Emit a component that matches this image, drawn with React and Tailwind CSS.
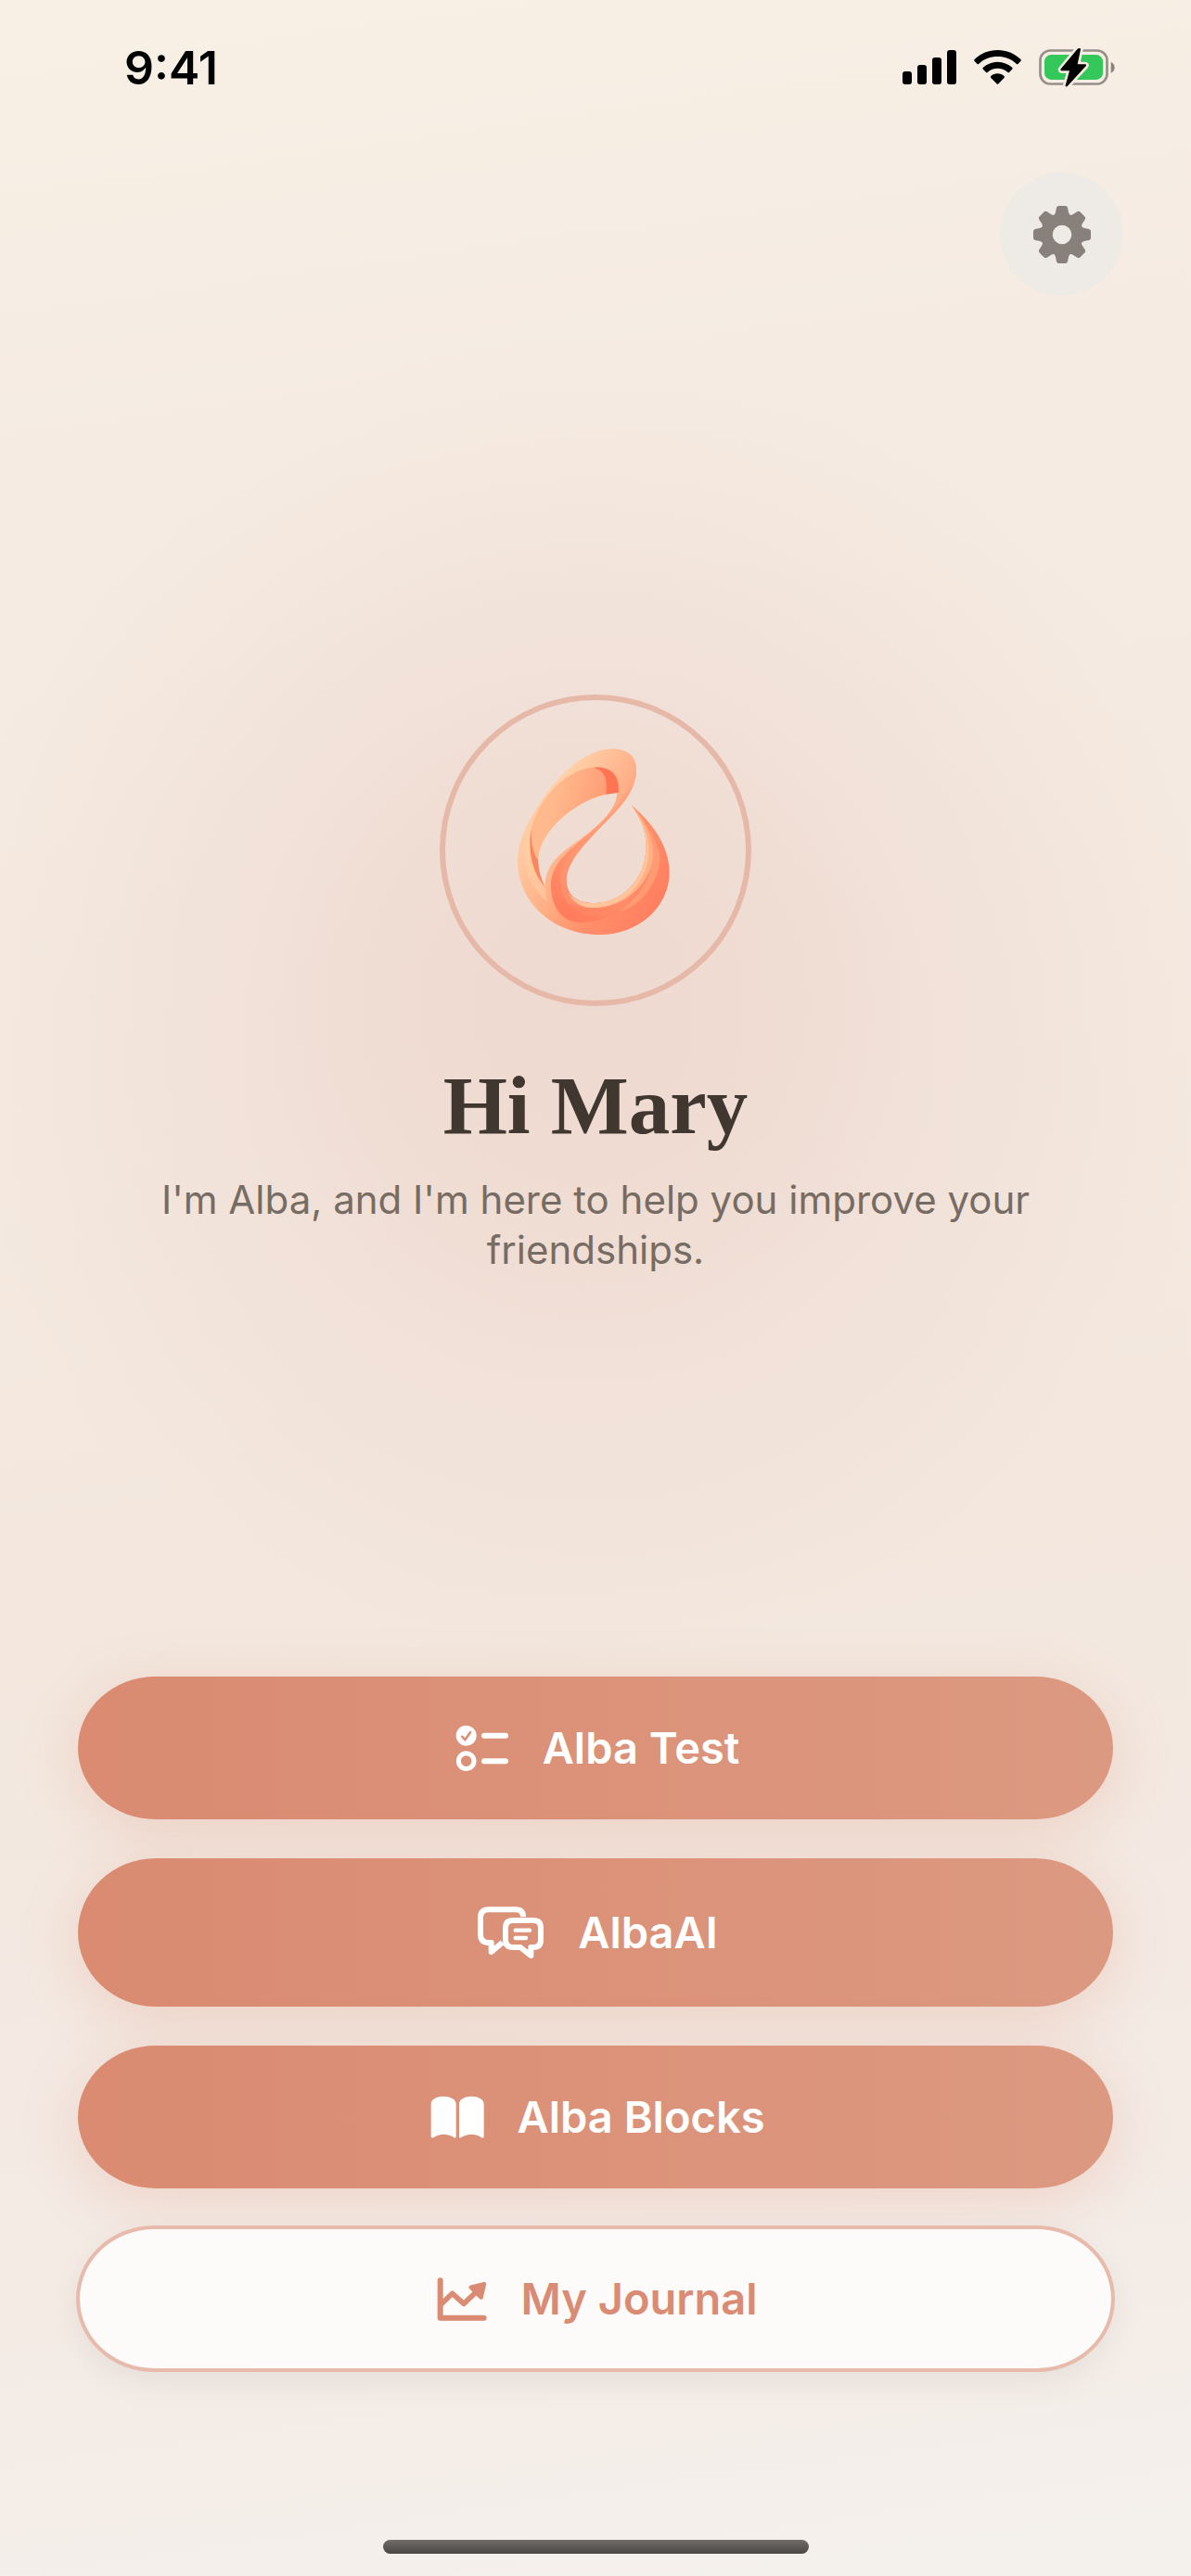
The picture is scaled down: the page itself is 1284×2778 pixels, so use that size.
import React from 'react';

const SignalIcon = () => (
    <svg className="w-[58px] h-[38px]" viewBox="0 0 58 38" fill="#000">
        <rect x="0" y="23" width="10" height="14" rx="3" />
        <rect x="16" y="16" width="10" height="21" rx="3" />
        <rect x="32" y="8" width="10" height="29" rx="3" />
        <rect x="48" y="0" width="10" height="37" rx="3" />
    </svg>
);

const WifiIcon = () => (
    <svg className="w-[51px] h-[38px]" viewBox="0 0 153 114" fill="#000">
        <path d="M76.500 0C105 0 131 11 151 30q3 3 0 6l-8 8q-3 3-6 0C121 29 100 21 76.500 21S32 29 16 44q-3 3-6 0l-8-8q-3-3 0-6C22 11 48 0 76.500 0z" />
        <path d="M76.500 38c18 0 34 7 47 18q3 3 0 6l-9 9q-3 3-6 0c-9-8-20-12-32-12s-23 4-32 12q-3 3-6 0l-9-9q-3-3 0-6c13-11 29-18 47-18z" />
        <path d="M76.500 76c8 0 15 3 21 8q3 3 0 6l-18 19q-3 3-6 0L55 90q-3-3 0-6c6-5 13-8 21.500-8z" />
    </svg>
);

const BatteryIcon = () => (
    <svg className="w-[82px] h-[42px]" viewBox="0 0 246 126">
        <rect x="4.500" y="7.500" width="216" height="108" rx="32" fill="none" stroke="#968f89" strokeWidth="8" />
        <rect x="18" y="21" width="189" height="81" rx="22" fill="#34c759" />
        <path d="M233 44c7 3 12 10 12 18s-5 15-12 18z" fill="#8a827c" />
        <path
            d="M125 2 71 67q-3 5 3 6h25l-13 47q-1 7 6 3l60-65q4-6-3-6h-24l10-48q0-7-10-2z"
            fill="#000"
            stroke="#f5ebe2"
            strokeWidth="16"
            strokeLinejoin="round"
            paintOrder="stroke"
        />
    </svg>
);

const GearIcon = () => (
    <svg className="w-16 h-16" viewBox="-32 -32 64 64" fill="#88807b">
        <circle r="16.500" fill="none" stroke="#88807b" strokeWidth="12.500" />
        {[0, 45, 90, 135, 180, 225, 270, 315].map((angle) => (
            <path
                key={angle}
                transform={`rotate(${angle})`}
                d="M-10-20Q-7.500-21.500-7-24L-6-29Q-5.500-31-3.500-31H3.500Q5.500-31 6-29L7-24Q7.500-21.500 10-20L8-16H-8z"
            />
        ))}
    </svg>
);

const AlbaLogo = () => (
    <svg className="w-60 h-60" viewBox="-54 21 720 720" role="img" aria-label="Alba">
        <defs>
            <linearGradient id="body" gradientUnits="userSpaceOnUse" x1="90" y1="330" x2="500" y2="560">
                <stop offset="0" stopColor="#ffcba2" />
                <stop offset="0.35" stopColor="#ffae84" />
                <stop offset="0.65" stopColor="#ff8f6b" />
                <stop offset="1" stopColor="#ff8061" />
            </linearGradient>
            <linearGradient id="top" gradientUnits="userSpaceOnUse" x1="250" y1="80" x2="430" y2="190">
                <stop offset="0" stopColor="#ffcfa6" />
                <stop offset="1" stopColor="#ffa983" />
            </linearGradient>
            <linearGradient id="inner" gradientUnits="userSpaceOnUse" x1="180" y1="190" x2="350" y2="230">
                <stop offset="0" stopColor="#ffb98c" />
                <stop offset="1" stopColor="#ff9a74" />
            </linearGradient>
            <linearGradient id="ribbon" gradientUnits="userSpaceOnUse" x1="400" y1="200" x2="240" y2="610">
                <stop offset="0" stopColor="#ffa47d" />
                <stop offset="0.5" stopColor="#ff9470" />
                <stop offset="1" stopColor="#ff7b5b" />
            </linearGradient>
            <linearGradient id="fold" gradientUnits="userSpaceOnUse" x1="200" y1="590" x2="480" y2="540">
                <stop offset="0" stopColor="#ff7b5b" />
                <stop offset="1" stopColor="#ff8f6b" />
            </linearGradient>
        </defs>
        <path
            fill="url(#body)"
            fillRule="evenodd"
            d="M362 53C412 53 438 79 438 120C438 172 408 217 360 268C300 331 212 410 212 477C212 528 248 552 300 552C388 552 470 479 470 367C470 318 452 278 422 235C484 286 545 364 545 452C545 562 448 654 318 654C170 654 54 550 54 414C54 362 78 305 112 252C184 132 276 53 362 53ZM376 194C268 199 120 310 120 420C120 450 131 478 143 499C145 434 174 404 236 360C312 306 376 250 376 194Z"
        />
        <path
            fill="url(#top)"
            d="M112 252C184 132 276 53 362 53C412 53 438 79 438 120C438 160 416 196 388 222L360 250C372 230 380 212 380 190C384 138 356 113 305 113C226 118 156 184 118 250Z"
        />
        <path
            fill="#ffd0a8"
            d="M108 258C82 300 72 355 76 414C80 464 108 510 150 548C145 532 144 514 143 499C112 460 94 410 94 350C94 318 104 288 120 254Z"
            opacity="0.55"
        />
        <path
            fill="url(#inner)"
            d="M94 365C92 296 125 226 180 172C220 134 262 113 306 113C358 113 382 140 380 194C276 197 160 286 128 370C120 392 119 418 124 450C110 430 96 400 94 365Z"
        />
        <path fill="#ff7453" d="M300 113C354 108 386 136 380 194L340 200C346 156 340 124 300 113Z" />
        <path fill="#f98661" d="M97 312C98 360 104 390 120 412C122 448 130 474 143 499C108 462 86 400 97 312Z" />
        <path
            fill="url(#ribbon)"
            d="M428 170C418 203 390 236 360 268C300 331 212 410 212 477C212 528 248 552 300 552C340 552 376 540 404 518L440 530C400 575 330 614 258 614C196 614 162 562 162 494C162 438 198 400 250 356C320 302 375 250 396 205Z"
        />
        <path
            fill="#ff9d76"
            d="M212 477C212 528 248 552 300 552C340 552 376 540 404 518L410 556C370 590 320 602 280 594C220 576 192 530 192 478C194 434 214 400 250 366L290 342C242 394 212 434 212 477Z"
            opacity="0.45"
        />
        <path
            fill="url(#fold)"
            d="M226 556C268 575 330 568 388 548C440 528 480 480 496 420C502 470 470 528 420 560C360 597 300 614 250 614C220 610 214 590 206 572Z"
            opacity="0.65"
        />
        <path
            fill="#ff9b74"
            d="M422 235C470 290 500 340 514 395C518 470 460 560 380 580C440 540 482 484 490 410C494 345 462 286 422 235Z"
        />
        <path
            fill="#ffb085"
            d="M422 235C464 286 490 334 493 385C494 480 410 566 300 567C388 552 470 479 470 367C470 318 452 278 422 235Z"
        />
        <path
            fill="#ffc49a"
            d="M422 235C460 288 478 330 478 378C478 484 398 568 296 567C262 566 232 550 218 518C236 543 266 552 300 552C388 552 470 479 470 367C470 318 452 278 422 235Z"
        />
    </svg>
);

const TestIcon = () => (
    <svg className="w-[58px] h-[51px]" viewBox="96 61 174 152" fill="none" strokeLinecap="round" strokeLinejoin="round">
        <circle cx="131" cy="96" r="33" fill="currentColor" />
        <path d="M118 99l9 10 17-24" stroke="#da9078" strokeWidth="8" />
        <circle cx="131" cy="178" r="25" stroke="currentColor" strokeWidth="15" />
        <path d="M189 96h69M189 178h69" stroke="currentColor" strokeWidth="18" />
    </svg>
);

const ChatIcon = () => (
    <svg
        className="w-[73px] h-[58px]"
        viewBox="102 75 219 174"
        fill="none"
        stroke="currentColor"
        strokeWidth="18"
        strokeLinecap="round"
        strokeLinejoin="round"
    >
        <path d="M252 112v-1q0-23-24-23H140q-26 0-26 26v54q0 27 27 27h8v30l36-31" strokeLinecap="butt" />
        <path d="M219 123h66q24 0 24 24v39q0 24-24 24h-8v27l-34-27h-24q-24 0-24-24v-39q0-24 24-24z" />
        <path d="M227 155h46M227 180h34" strokeWidth="13" />
    </svg>
);

const BookIcon = () => (
    <svg className="w-[58px] h-[46px]" viewBox="70 91 174 138" fill="currentColor">
        <path d="M72 118C72 102 92 93 112 93S153 102 153 118V223q0 6-6 4C128 213 98 213 80 227q-8 2-8-4z" />
        <path d="M163 118C163 102 183 93 203 93S243 102 243 118V223q0 6-7 4C218 213 188 213 169 227q-6 2-6-4z" />
    </svg>
);

const ChartIcon = () => (
    <svg
        className="w-[54px] h-[47px]"
        viewBox="97 79 162 141"
        fill="none"
        stroke="currentColor"
        strokeWidth="18"
        strokeLinecap="round"
        strokeLinejoin="round"
    >
        <path d="M108 89v121h141" />
        <path d="M110 167l37-36 37 33 40-38" strokeWidth="17" />
        <path d="M207 111l43-11-10 44z" fill="currentColor" strokeWidth="13" />
    </svg>
);

const menuItems = [
    { label: 'Alba Test', icon: <TestIcon />, height: 'h-[154px]' },
    { label: 'AlbaAI', icon: <ChatIcon />, height: 'h-40' },
    { label: 'Alba Blocks', icon: <BookIcon />, height: 'h-[154px]' },
];

const StatusBar = () => (
    <div className="flex items-center justify-between h-[142px] pl-[134px] pr-[82px] pt-1">
        <span className="text-[50px] leading-none font-semibold text-black">9:41</span>
        <div className="flex items-center gap-[19px]">
            <SignalIcon />
            <WifiIcon />
            <BatteryIcon />
        </div>
    </div>
);

const App = () => {
    return (
        <div className="flex flex-col min-h-screen font-['Inter','Liberation_Sans',sans-serif] bg-[radial-gradient(ellipse_54%_26%_at_49%_39%,#eed9d0_0%,#eed9d0cc_30%,#eed9d055_65%,#eed9d000_100%),linear-gradient(172deg,#f8efe5_0%,#f5ebe2_20%,#f3e7de_60%,#f4ebe5_85%,#f4f1ed_100%)]">
            <StatusBar />

            <header className="flex justify-end pt-11 pr-[73px]">
                <button
                    type="button"
                    aria-label="Settings"
                    className="flex items-center justify-center w-[133px] h-[133px] rounded-full bg-[#eeeae6]"
                >
                    <GearIcon />
                </button>
            </header>

            <main className="flex flex-col flex-1">
                {/* Greeting */}
                <section className="flex flex-col items-center justify-center flex-1 px-24 pb-1 text-center">
                    <div className="flex items-center justify-center w-[336px] h-[336px] border-6 border-[#e5b8a8] rounded-full">
                        <AlbaLogo />
                    </div>
                    <h1 className="mt-[54px] text-[89px] leading-[106px] font-bold text-[#403830] font-['Liberation_Serif',serif]">
                        Hi Mary
                    </h1>
                    <p className="mt-[22px] max-w-[960px] text-[42px] leading-[54px] text-[#776c63]">
                        I'm Alba, and I'm here to help you improve your friendships.
                    </p>
                </section>

                {/* Menu */}
                <nav className="flex flex-col gap-[42px] px-[84px]">
                    {menuItems.map((item) => (
                        <button
                            key={item.label}
                            type="button"
                            className={`${item.height} flex items-center justify-center gap-9 rounded-[84px/50%] bg-linear-to-r from-[#da8b71] to-[#dc9981] text-white text-[47px] font-semibold pl-1 shadow-[0_12px_60px_#da8c7240]`}
                        >
                            {item.icon}
                            {item.label}
                        </button>
                    ))}
                    <button
                        type="button"
                        className="flex items-center justify-center gap-9 h-[158px] -m-0.5 rounded-[84px/50%] border-4 border-[#e7baab] bg-[#fcfbfa] bg-clip-padding text-[#da8b73] text-[47px] font-semibold pl-1 shadow-[0_12px_36px_#0000000f]"
                    >
                        <ChartIcon />
                        My Journal
                    </button>
                </nav>
            </main>

            <footer className="flex justify-center pt-[183px] pb-6">
                <div className="w-[459px] h-[15px] rounded-full bg-linear-to-b from-[#716c69] to-[#4b4744]" />
            </footer>
        </div>
    );
};

export default App;
